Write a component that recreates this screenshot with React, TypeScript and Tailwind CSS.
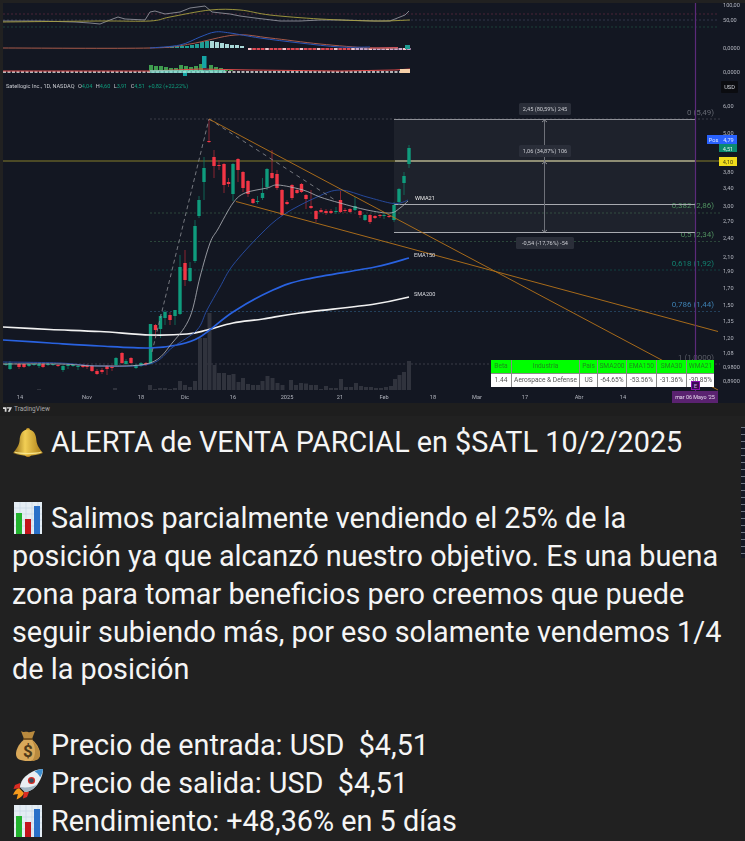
type Candle = [number, number, number, number, number, "g" | "r"];

const GREEN = "#0f9c7d";
const RED = "#f23645";

// x, body top, body bottom, wick top, wick bottom
const candles: Candle[] = [
  [6, 364, 365, 362, 366, "g"], [10, 363, 369, 361, 370, "g"], [19, 364, 367, 363, 369, "r"], [24, 364, 367, 364, 368, "r"],
  [29, 364, 366, 364, 367, "g"], [34, 364, 365, 363, 366, "g"], [39, 364, 366, 363, 368, "g"], [43, 364, 367, 363, 368, "r"],
  [48, 364, 365, 363, 366, "g"], [53, 364, 365, 364, 366, "g"], [58, 365, 366, 364, 367, "r"], [63, 366, 370, 365, 372, "g"],
  [68, 365, 366, 364, 369, "g"], [73, 365, 366, 364, 367, "g"], [78, 366, 367, 365, 370, "g"], [83, 365, 367, 364, 368, "r"],
  [87, 366, 367, 364, 369, "r"], [92, 366, 371, 365, 372, "r"], [97, 371, 374, 369, 375, "r"], [102, 370, 372, 368, 374, "r"],
  [107, 366, 369, 365, 375, "r"], [112, 367, 368, 365, 371, "r"], [116, 358, 365, 357, 366, "g"], [122, 353, 363, 352, 364, "r"],
  [126, 361, 364, 359, 365, "g"], [131, 358, 363, 357, 364, "r"], [136, 365, 368, 364, 369, "g"], [141, 363, 366, 362, 367, "g"],
  [146, 363, 365, 362, 366, "r"], [150.5, 324, 364, 324, 364, "g"], [155.5, 325, 330, 324, 338, "r"], [160.5, 316, 329, 314, 338, "g"],
  [165, 312, 318, 310, 325, "g"], [170, 315, 320, 312, 325, "r"], [175, 310, 316, 310, 325, "g"], [180, 267, 314, 255, 315, "g"],
  [185, 263, 280, 250, 286, "r"], [190, 268, 281, 262, 282, "g"], [195, 226, 261, 220, 263, "g"], [199, 200, 216, 196, 218, "g"],
  [204, 168, 182, 157, 200, "g"], [209, 141, 142, 119, 143, "r"], [214, 157, 166, 150, 178, "r"], [219, 165, 166, 160, 170, "r"],
  [224, 164, 185, 163, 193, "r"], [228.5, 182, 184, 178, 187, "r"], [233, 164, 194, 163, 201, "g"], [238, 159, 170, 158, 182, "r"],
  [243, 172, 188, 171, 192, "r"], [248, 181, 194, 180, 197, "r"], [253, 199, 203, 198, 204, "r"], [257.5, 201, 202, 196, 204, "g"],
  [262.5, 193, 198, 178, 200, "g"], [267, 169, 187, 168, 190, "g"], [272, 173, 178, 150, 179, "r"], [277, 174, 188, 170, 190, "r"],
  [282, 190, 215, 189, 216, "r"], [287, 202, 204, 200, 205, "r"], [292, 185, 198, 184, 200, "r"], [297, 190, 193, 188, 194, "r"],
  [301.5, 184, 192, 183, 193, "r"], [306, 195, 199, 194, 209, "r"], [311, 206, 208, 190, 209, "r"], [316, 211, 219, 210, 222, "r"],
  [321, 210, 212, 208, 213, "r"], [326, 211, 213, 209, 215, "r"], [331, 211, 213, 209, 214, "r"], [336, 211, 212, 207, 214, "g"],
  [340.5, 200, 212, 191, 213, "r"], [345, 210, 211, 208, 213, "r"], [350, 209, 212, 208, 213, "r"], [355, 206, 210, 197, 211, "g"],
  [360, 211, 215, 210, 218, "r"], [365, 215, 220, 214, 221, "g"], [370, 215, 222, 214, 224, "r"], [375, 216, 218, 215, 219, "r"],
  [380, 215, 216, 214, 218, "r"], [384, 215, 216, 212, 219, "g"], [389, 216, 217, 215, 218, "r"], [394, 205, 220, 202, 222, "g"],
  [399, 189, 202, 188, 205, "g"], [404, 176, 183, 172, 195, "g"], [409, 148, 164, 145, 168, "g"],
];

// x, top of the bar
const volumes: [number, number][] = [
  [39, 389], [115, 388], [150, 385], [155, 389], [160, 388], [165, 388], [170, 389], [175, 388], [180, 381], [185, 385], [190, 387],
  [195, 381], [200, 338], [205, 338], [209.5, 313], [214.5, 365], [219, 373], [224, 373], [229, 375], [233.5, 374], [238.5, 382],
  [243, 378], [248, 384], [253, 385], [258, 385], [262.5, 381], [267.5, 376], [272.5, 378], [277.5, 383], [282.5, 385], [291, 380],
  [296, 385], [301, 383], [306, 383.5], [311, 385], [316, 385], [321, 389], [326, 386], [331, 388], [336, 388], [341, 379], [346, 387],
  [351, 387], [356, 383], [361, 386], [366, 387], [371, 387], [376, 388], [381, 388], [386, 387], [391, 386], [395, 379], [399.5, 375],
  [404, 372], [409, 361],
];

const timeLabels: [string, number][] = [
  ["14", 20], ["Nov", 87], ["18", 141], ["Dic", 185], ["16", 233], ["2025", 287], ["21", 340], ["Feb", 384],
  ["18", 433], ["Mar", 477], ["17", 525], ["Abr", 579], ["14", 623],
];

const priceLabels: [string, number][] = [
  ["100,00", 5], ["50,00", 20], ["0,0000", 48], ["0,0000", 72], ["6,00", 106], ["5,00", 133], ["3,80", 172], ["3,40", 188],
  ["3,00", 206], ["2,70", 221], ["2,40", 238], ["2,10", 257], ["1,90", 271], ["1,70", 288], ["1,50", 305], ["1,35", 321],
  ["1,20", 338], ["1,08", 353], ["0,9800", 367], ["0,8900", 381],
];

const fibLevels: [string, number, number, string][] = [
  ["0,382 (2,86)", 213, 205, "#4f8f5f"],
  ["0,5 (2,34)", 241.5, 234, "#4f8f5f"],
  ["0,618 (1,92)", 270, 263, "#12806f"],
  ["0,786 (1,44)", 311.5, 304, "#3d7fb0"],
];

const tableCols = [
  { head: "Beta", value: "1.44", w: "w-[20px]" },
  { head: "Industria", value: "Aerospace & Defense", w: "w-[67px]" },
  { head: "País", value: "US", w: "w-[17px]" },
  { head: "SMA200", value: "-64.65%", w: "w-[28px]" },
  { head: "EMA150", value: "-53.56%", w: "w-[29px]" },
  { head: "SMA30", value: "-31.36%", w: "w-[29px]" },
  { head: "WMA21", value: "-30.85%", w: "w-[27px]" },
];

// turns a list of points into a smooth curve, the moving averages are not angular
function smooth(points: [number, number][]) {
  let d = `M${points[0][0]} ${points[0][1]}`;
  for (let i = 0; i < points.length - 1; i++) {
    const p0 = points[i - 1] ?? points[i];
    const p1 = points[i];
    const p2 = points[i + 1];
    const p3 = points[i + 2] ?? p2;
    const c1x = p1[0] + (p2[0] - p0[0]) / 6;
    const c1y = p1[1] + (p2[1] - p0[1]) / 6;
    const c2x = p2[0] - (p3[0] - p1[0]) / 6;
    const c2y = p2[1] - (p3[1] - p1[1]) / 6;
    d += ` C${c1x} ${c1y} ${c2x} ${c2y} ${p2[0]} ${p2[1]}`;
  }
  return d;
}

const sma200: [number, number][] = [[3, 327], [50, 329.5], [100, 331.5], [150, 335], [187, 334], [207, 330], [233, 323], [263, 319], [300, 313], [375, 304], [409, 297]];
const ema150: [number, number][] = [[3, 340], [50, 343], [100, 346], [150, 348], [177, 345], [200, 337], [233, 312], [273, 290], [307, 279], [375, 267], [409, 258]];
const thinBlue: [number, number][] = [[3, 362], [60, 363], [100, 366], [150, 364], [173, 347], [197, 330], [207, 310], [220, 287], [233, 265], [260, 235], [283, 215], [317, 197], [340, 190], [367, 197], [390, 203], [400, 203], [408, 200]];
const thinWhite: [number, number][] = [[3, 364], [60, 364], [100, 366], [150, 363], [173, 342], [190, 317], [200, 277], [210, 243], [218, 229], [233, 203], [245, 193], [267, 188], [278, 185], [303, 190], [320, 197], [340, 203], [367, 210], [390, 213], [400, 208], [408, 201]];
const macdSignal: [number, number][] = [[3, 48], [150, 48], [190, 44], [235, 35], [270, 38], [320, 44], [370, 48], [398, 48]];
const macdLine: [number, number][] = [[150, 48], [180, 45], [200, 37], [215, 32], [230, 33], [260, 38], [300, 43], [340, 47], [370, 47]];
const rsiAvg: [number, number][] = [[3, 22], [100, 21], [150, 21], [170, 17], [210, 10], [240, 10], [270, 15], [320, 19], [375, 21], [410, 20]];

const macdUp = [0, 0, 1, 1, 1, 1, 2, 3, 5, 6, 6, 5, 4, 3, 2, 2, 1];

function Tooltip({ x, y, w, text }: { x: number; y: number; w: number; text: string }) {
  return (
    <g>
      <rect x={x - w / 2} y={y - 6} width={w} height={12} rx={1.5} fill="#2a2e39" />
      <text x={x} y={y + 2} textAnchor="middle" fontSize={5.6} fill="#c8cad0">{text}</text>
    </g>
  );
}

function Chart() {
  return (
    <svg width={745} height={403} viewBox="0 0 745 403" className="block font-['Roboto'] blur-[0.45px]">
      <rect x={-2} y={-2} width={749} height={407} fill="#212121" />
      <rect x={3} y={3} width={744} height={400} fill="#131722" />

      {/* rsi panel */}
      <line x1={3} x2={718} y1={14} y2={14} stroke="#4a2436" strokeDasharray="2 2" />
      <line x1={3} x2={718} y1={20} y2={20} stroke="#33364a" strokeDasharray="2 2" />
      <line x1={3} x2={718} y1={27} y2={27} stroke="#1d4038" strokeDasharray="2 2" />
      <polyline fill="none" stroke="#9ea0a8" strokeWidth={0.8} points="3,21 40,21 75,22 90,23 100,24 110,20 118,17 125,19 145,20 150,12 155,11 165,14 180,12 190,8 205,6 212,12 230,14 240,16 255,18 280,21 300,21 320,20 340,20 375,21 390,21 405,15 409,11" />
      <path fill="none" stroke="#a8a040" strokeWidth={0.9} d={smooth(rsiAvg)} />

      {/* macd panel */}
      {macdUp.map((h, i) => (
        <rect key={i} x={160 + i * 5} y={47 - h} width={4} height={h + 1} fill={i > 9 ? "#a9d8d8" : "#1f9d94"} />
      ))}
      {Array.from({ length: 38 }, (_, i) => 248 + i * 4.3).map((x, i) => (
        <rect key={x} x={x} y={48} width={3.6} height={2} fill={i % 4 === 0 ? "#f7c5cc" : i > 24 ? "#c9a5c9" : "#e04a55"} />
      ))}
      <path fill="none" stroke="#a85a4a" strokeWidth={1} d={smooth(macdSignal)} />
      <path fill="none" stroke="#2a56b8" strokeWidth={1} d={smooth(macdLine)} />
      <polyline fill="none" stroke="#d05560" strokeWidth={1} points="370,48 398,47.5" />
      <rect x={405} y={45} width={5} height={4} fill="#1f9d94" />

      {/* third panel */}
      {[[149, 65], [154, 66], [159, 66], [164, 67], [169, 68], [174, 68], [179, 65], [184, 66], [189, 67], [194, 66], [199, 64], [209, 65], [214, 67], [219, 68], [224, 69], [229, 70]].map(([x, top]) => (
        <rect key={x} x={x} y={top} width={4} height={71 - top} fill="#3f9d4f" />
      ))}
      <rect x={202} y={56} width={4.5} height={12} fill="#16a5a5" />
      <rect x={183} y={71} width={4} height={5} fill="#16a5a5" />
      <polyline fill="none" stroke="#e8e8e8" strokeWidth={1.6} strokeDasharray="3 1.5" points="3,72 410,72" />
      <polyline fill="none" stroke="#e04a4a" strokeWidth={1} points="3,71 150,71 200,69 250,70 340,71 395,70 410,69" />
      <rect x={150} y={70} width={75} height={3} fill="#7fe0d0" opacity={0.75} />
      <rect x={400} y={69} width={10} height={4} fill="#f5cfa8" />

      <text x={6} y={88} fontSize={5.6} fill="#c8cad0">Satellogic Inc., 1D, NASDAQ</text>
      <text x={78} y={88} fontSize={5.6} fill="#0f9c7d">
        <tspan fill="#c8cad0">O</tspan>4,04 <tspan fill="#c8cad0" dx={2}>H</tspan>4,60 <tspan fill="#c8cad0" dx={2}>L</tspan>3,91 <tspan fill="#c8cad0" dx={2}>C</tspan>4,51 <tspan dx={2}>+0,82 (+22,22%)</tspan>
      </text>

      {/* fib box */}
      <rect x={394} y={119} width={302} height={114} fill="#1e222c" />
      <line x1={150} x2={720} y1={119} y2={119} stroke="#3a3d47" strokeDasharray="2 2" />
      {fibLevels.map(([label, y, ty, color]) => (
        <g key={label}>
          <line x1={150} x2={720} y1={y} y2={y} stroke={color} strokeOpacity={0.4} strokeDasharray="2 2" />
          <text x={714} y={ty + 3} textAnchor="end" fontSize={8} fill={color}>{label}</text>
        </g>
      ))}
      <line x1={3} x2={720} y1={364} y2={364} stroke="#3a3d47" strokeDasharray="2 2" />
      <text x={714} y={360} textAnchor="end" fontSize={8} fill="#575a63">1 (1,0000)</text>
      <text x={714} y={115} textAnchor="end" fontSize={8} fill="#666973">0 (5,49)</text>

      {/* volume */}
      {volumes.map(([x, top]) => (
        <rect key={x} x={x - 2} y={top} width={4} height={390 - top} fill="#30333d" />
      ))}

      {/* target lines */}
      <line x1={3} x2={395} y1={161} y2={161} stroke="#4c4a26" strokeWidth={2} />
      <line x1={395} x2={695} y1={161} y2={161} stroke="#b5b28c" strokeWidth={1.4} />
      <line x1={695} x2={720} y1={161} y2={161} stroke="#4c4a26" strokeWidth={2} />
      <line x1={394} x2={695} y1={119.5} y2={119.5} stroke="#8d8f96" />
      <line x1={394} x2={695} y1={204.5} y2={204.5} stroke="#a8aab0" />
      <line x1={394} x2={695} y1={232.5} y2={232.5} stroke="#a8aab0" />
      <line x1={544.5} x2={544.5} y1={120} y2={232} stroke="#6e7179" />
      <polyline fill="none" stroke="#8d8f96" points="542,122 544.5,120 547,122" />
      <polyline fill="none" stroke="#8d8f96" points="542,164 544.5,162 547,164" />
      <polyline fill="none" stroke="#8d8f96" points="542,230 544.5,232 547,230" />

      {/* candles */}
      {candles.map(([x, top, bottom, wickTop, wickBottom, kind]) => (
        <g key={x}>
          <line x1={x} x2={x} y1={wickTop} y2={wickBottom} stroke={kind === "g" ? "#0d7a63" : "#a82835"} strokeWidth={0.8} />
          <rect x={x - 1.7} y={top} width={3.4} height={bottom - top} fill={kind === "g" ? GREEN : RED} />
        </g>
      ))}

      {/* averages */}
      <path fill="none" stroke="#f1f1f1" strokeWidth={1.7} d={smooth(sma200)} />
      <path fill="none" stroke="#2962e0" strokeWidth={1.7} d={smooth(ema150)} />
      <path fill="none" stroke="#284ea8" strokeWidth={0.9} d={smooth(thinBlue)} />
      <path fill="none" stroke="#b4b6bc" strokeWidth={0.8} d={smooth(thinWhite)} />
      <polyline fill="none" stroke="#8d8f96" strokeWidth={0.8} strokeDasharray="4 3" points="152,352 209,119" />
      <polyline fill="none" stroke="#8d8f96" strokeWidth={0.8} strokeDasharray="4 4" points="209,119 335,200" />
      <line x1={209} y1={119} x2={718} y2={390} stroke="#b8741a" strokeWidth={0.9} />
      <line x1={236} y1={201.5} x2={718} y2={331.5} stroke="#b8741a" strokeWidth={0.9} />

      <text x={415} y={200} fontSize={5.6} fill="#e8e8e8">WMA21</text>
      <text x={414} y={257} fontSize={5.6} fill="#d8dae0">EMA150</text>
      <text x={414} y={296} fontSize={5.6} fill="#d8dae0">SMA200</text>

      <Tooltip x={545} y={109} w={52} text="2,45 (80,59%) 245" />
      <Tooltip x={545} y={151} w={52} text="1,06 (34,87%) 106" />
      <Tooltip x={545} y={243} w={58} text="-0,54 (-17,76%) -54" />

      {/* purple date marker */}
      <line x1={695.5} x2={695.5} y1={3} y2={391} stroke="#5b2a7a" strokeWidth={1.2} />

      {/* time axis */}
      {timeLabels.map(([label, x]) => (
        <text key={label + x} x={x} y={399} textAnchor="middle" fontSize={5.6} fill="#b2b5be">{label}</text>
      ))}
      <rect x={672} y={391} width={46} height={12} fill="#5a2270" />
      <text x={695} y={399} textAnchor="middle" fontSize={5.4} fill="#e8dcef">mar 06 Mayo '25</text>

      {/* price axis */}
      {priceLabels.map(([label, y]) => (
        <text key={label + y} x={723} y={y + 2} fontSize={5.6} fill="#b2b5be">{label}</text>
      ))}
      <rect x={721} y={81} width={17} height={12} rx={1} fill="#0b0c10" />
      <text x={729.5} y={89} textAnchor="middle" fontSize={5.6} fill="#d1d4dc">USD</text>
      <rect x={707} y={135} width={30} height={9} fill="#2962ff" />
      <text x={713.5} y={142} textAnchor="middle" fontSize={5.6} fill="#dfe7ff">Pos</text>
      <text x={728.5} y={142} textAnchor="middle" fontSize={5.6} fill="#dfe7ff">4,79</text>
      <rect x={719} y={144} width={18} height={8} fill="#0b8a6f" />
      <text x={728} y={150.5} textAnchor="middle" fontSize={5.6} fill="#d5f0ea">4,51</text>
      <rect x={719} y={157} width={18} height={9} fill="#f0dc1c" />
      <text x={728} y={164} textAnchor="middle" fontSize={5.6} fill="#4a4410">4,10</text>
    </svg>
  );
}

function BellIcon() {
  return (
    <svg viewBox="0 0 32 32" className="w-[33px] h-[33px]">
      <defs>
        <linearGradient id="bellGold" x1="0" x2="1" y1="0" y2="0">
          <stop offset="0" stopColor="#8a6410" />
          <stop offset="0.4" stopColor="#f2cf55" />
          <stop offset="1" stopColor="#a87a14" />
        </linearGradient>
      </defs>
      <circle cx="16" cy="27" r="3.4" fill="#c08a20" />
      <circle cx="16" cy="3.4" r="2" fill="#c99a2a" />
      <path d="M16 3C10 3 8 8 7.6 14 7.2 19 4 23 1 26.5 6 28.6 11 29 16 29s10-.4 15-2.500C28 23 24.800 19 24.400 14 24 8 22 3 16 3Z" fill="url(#bellGold)" />
      <path d="M2.500 25.500C8 27.500 24 27.500 29.500 25.500" stroke="#f8e58c" strokeWidth="1.2" fill="none" />
    </svg>
  );
}

function BarsIcon() {
  return (
    <svg viewBox="0 0 28 32" className="w-[28px] h-[32px]">
      <rect width="28" height="32" fill="#e4edf4" />
      <path d="M0 6H28M0 12H28M0 18H28M0 24H28M6 0V32M12 0V32M18 0V32M24 0V32" stroke="#c4d4e2" strokeWidth="0.6" />
      <rect x="2" y="11" width="6" height="21" fill="#22b32e" />
      <rect x="11" y="17" width="6" height="15" fill="#c4151c" />
      <rect x="20" y="4" width="6" height="28" fill="#2a70c8" />
    </svg>
  );
}

function MoneyBagIcon() {
  return (
    <svg viewBox="0 0 26 32" className="w-[26px] h-[32px]">
      <path d="M6 1C9 3 11 1 13 2c2 1 4-1 7-1l-3 8H9Z" fill="#b98a3e" />
      <path d="M9 8h8l1 2H8Z" fill="#7a5520" />
      <path d="M8.500 10C3 15 1 20 1 24c0 5 4 7 12 7s12-2 12-7c0-4-2-9-7.500-14Z" fill="#d9a95a" />
      <path d="M17 10c5 5 8 10 8 14 0 5-4 7-8 7 4-5 4-14 0-21Z" fill="#b98a3e" />
      <text x="13" y="27" textAnchor="middle" fontSize="17" fontWeight="700" fontFamily="Roboto" fill="#4d3a1a">$</text>
    </svg>
  );
}

function RocketIcon() {
  return (
    <svg viewBox="0 0 32 32" className="w-[32px] h-[32px]">
      <path d="M7 20C4 21 2 24 1 27c3-.6 4-.8 5-1-.6 2-1 3.500-1.400 5.500C8 30 11 28 12 25Z" fill="#f59a1c" />
      <path d="M8 15 3 17l-1.500 4 7-1Z" fill="#d92b22" />
      <path d="M17 24 15 29l-4 1.500 1-7Z" fill="#d92b22" />
      <path d="M31 1C24 1 16 5 11 11 9 14 8 17 8 19l5 5c2 0 5-1 8-3 6-5 10-13 10-20Z" fill="#e8eef2" />
      <path d="M31 1c-3.500.2-6 1-8.500 2.500 2.500 1.200 4.500 3.200 5.700 5.700C29.800 6.500 30.800 4 31 1Z" fill="#3f8fcf" />
      <path d="M8 19l5 5c4 0 9-3 13-8-5 3-11 4-18 3Z" fill="#9fb4c2" />
      <circle cx="19.500" cy="12.500" r="3.600" fill="#d92b22" />
      <circle cx="19.500" cy="12.500" r="2.300" fill="#3a4a5a" />
    </svg>
  );
}

function Emoji({ children }: { children: React.ReactNode }) {
  return <span className="inline-flex justify-center items-center align-middle w-[32px] h-[32px] mr-[7px] -mt-[4px]">{children}</span>;
}

export default function App() {
  return (
    <div className="relative w-[745px] h-[841px] overflow-hidden bg-[#212121]">
      <Chart />

      <div className="h-[13px] bg-[#1e1e1e] pl-[3px] flex items-center gap-[2px] font-['Roboto'] text-[#a8a8a8]">
        <svg viewBox="0 0 36 18" className="w-[9px] h-[5px]">
          <path d="M0 0H14V18H7V7H0ZM16 0H36L27 18H19L26 5H16Z" fill="#dcdcdc" />
        </svg>
        <span className="text-[6.5px] leading-none">TradingView</span>
      </div>

      <div className="px-3 pt-[8px] font-['Roboto'] text-[28.8px] leading-[37.9px] text-[#f5f5f5]">
        <p><Emoji><BellIcon /></Emoji>ALERTA de VENTA PARCIAL en $SATL 10/2/2025</p>
        <p className="mt-[37.9px]"><Emoji><BarsIcon /></Emoji>Salimos parcialmente vendiendo el 25% de la posición ya que alcanzó nuestro objetivo. Es una buena zona para tomar beneficios pero creemos que puede seguir subiendo más, por eso solamente vendemos 1/4 de la posición</p>
        <p className="mt-[37.9px]"><Emoji><MoneyBagIcon /></Emoji>Precio de entrada: USD&nbsp; $4,51</p>
        <p><Emoji><RocketIcon /></Emoji>Precio de salida: USD&nbsp; $4,51</p>
        <p><Emoji><BarsIcon /></Emoji>Rendimiento: +48,36% en 5 días</p>
      </div>

      {/* screener table sitting on the chart */}
      <div className="absolute left-[491px] top-[360px] flex gap-px bg-[#8a8a8a] font-['Roboto'] text-[6.6px] text-center leading-[13px] blur-[0.35px]">
        {tableCols.map((col) => (
          <div key={col.head} className={col.w}>
            <div className="bg-[#00ff00] text-[#1d8a1d] h-[13px] mb-px whitespace-nowrap">{col.head}</div>
            <div className="bg-white text-[#555] h-[13px] whitespace-nowrap">{col.value}</div>
          </div>
        ))}
      </div>
      <div className="absolute left-[691px] top-[381px] w-[9px] h-[9px] border border-[#8a10b0] bg-[#3a0a55] text-[#c9a5d9] font-['Roboto'] text-[6px] leading-[7px] text-center">E</div>

      {/* strip cut off at the right edge */}
      <div className="absolute left-[741px] top-[427px] w-[4px] h-[131px] bg-[#141824] bg-[repeating-linear-gradient(180deg,#6d7380_0px,#6d7380_1px,transparent_1px,transparent_7px)]" />
    </div>
  );
}
